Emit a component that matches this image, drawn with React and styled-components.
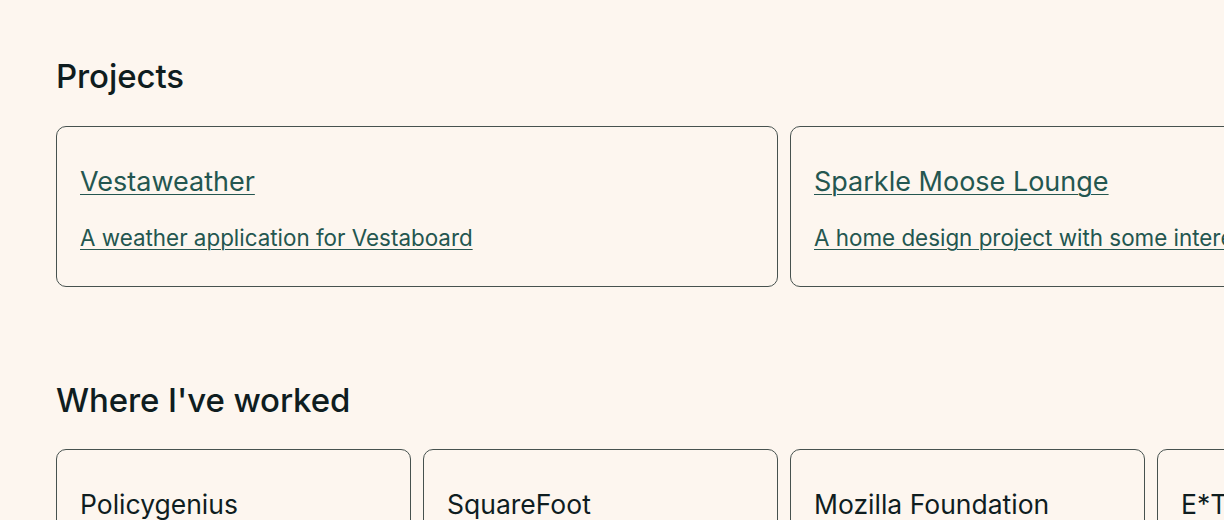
import React from 'react';
import styled, { createGlobalStyle } from 'styled-components';

const GlobalStyle = createGlobalStyle`
  body {
    margin: 0;
    background: #fdf6ef;
    font-family: Inter, "Noto Sans", sans-serif;
    color: #0f1d1f;
  }
`;

const Page = styled.main`
  width: 1456px;
  padding: 56px 56px 40px;
  box-sizing: content-box;
`;

const Section = styled.section`
  margin-bottom: 93px;
`;

const SectionTitle = styled.h2`
  margin: 0 0 ${({ tight }) => (tight ? '29px' : '30px')};
  font-size: 33px;
  line-height: 40px;
  font-weight: 500;
  letter-spacing: -0.1px;
`;

const Grid = styled.div`
  display: grid;
  grid-template-columns: repeat(${({ columns }) => columns}, 1fr);
  gap: 12px;
`;

const Card = styled.div`
  border: 1px solid #47524f;
  border-radius: 10px;
  padding: ${({ compact }) => (compact ? '38px 23px 36px' : '39px 23px 32px')};
`;

const CardLink = styled.a`
  display: block;
  color: #245650;
  text-decoration: underline;
  text-underline-offset: 3px;
  text-decoration-thickness: 1px;
  font-size: ${({ small }) => (small ? '22.4px' : '27px')};
  line-height: 32px;
  white-space: nowrap;
  & + & {
    margin-top: 24px;
  }
`;

const Employer = styled.h3`
  margin: 0;
  font-size: 26.5px;
  line-height: 32px;
  font-weight: 400;
  white-space: nowrap;
`;

const projects = [
  { name: 'Vestaweather', desc: 'A weather application for Vestaboard' },
  {
    name: 'Sparkle Moose Lounge',
    desc: 'A home design project with some interesting furniture',
  },
];

const jobs = ['Policygenius', 'SquareFoot', 'Mozilla Foundation', 'E*TRADE'];

const App = () => (
  <>
    <GlobalStyle />
    <Page>
      <Section>
        <SectionTitle>Projects</SectionTitle>
        <Grid columns={2}>
          {projects.map((p) => (
            <Card key={p.name}>
              <CardLink href="#">{p.name}</CardLink>
              <CardLink href="#" small>
                {p.desc}
              </CardLink>
            </Card>
          ))}
        </Grid>
      </Section>
      <Section>
        <SectionTitle tight>Where I've worked</SectionTitle>
        <Grid columns={4}>
          {jobs.map((j) => (
            <Card key={j} compact>
              <Employer>{j}</Employer>
            </Card>
          ))}
        </Grid>
      </Section>
    </Page>
  </>
);

export default App;
